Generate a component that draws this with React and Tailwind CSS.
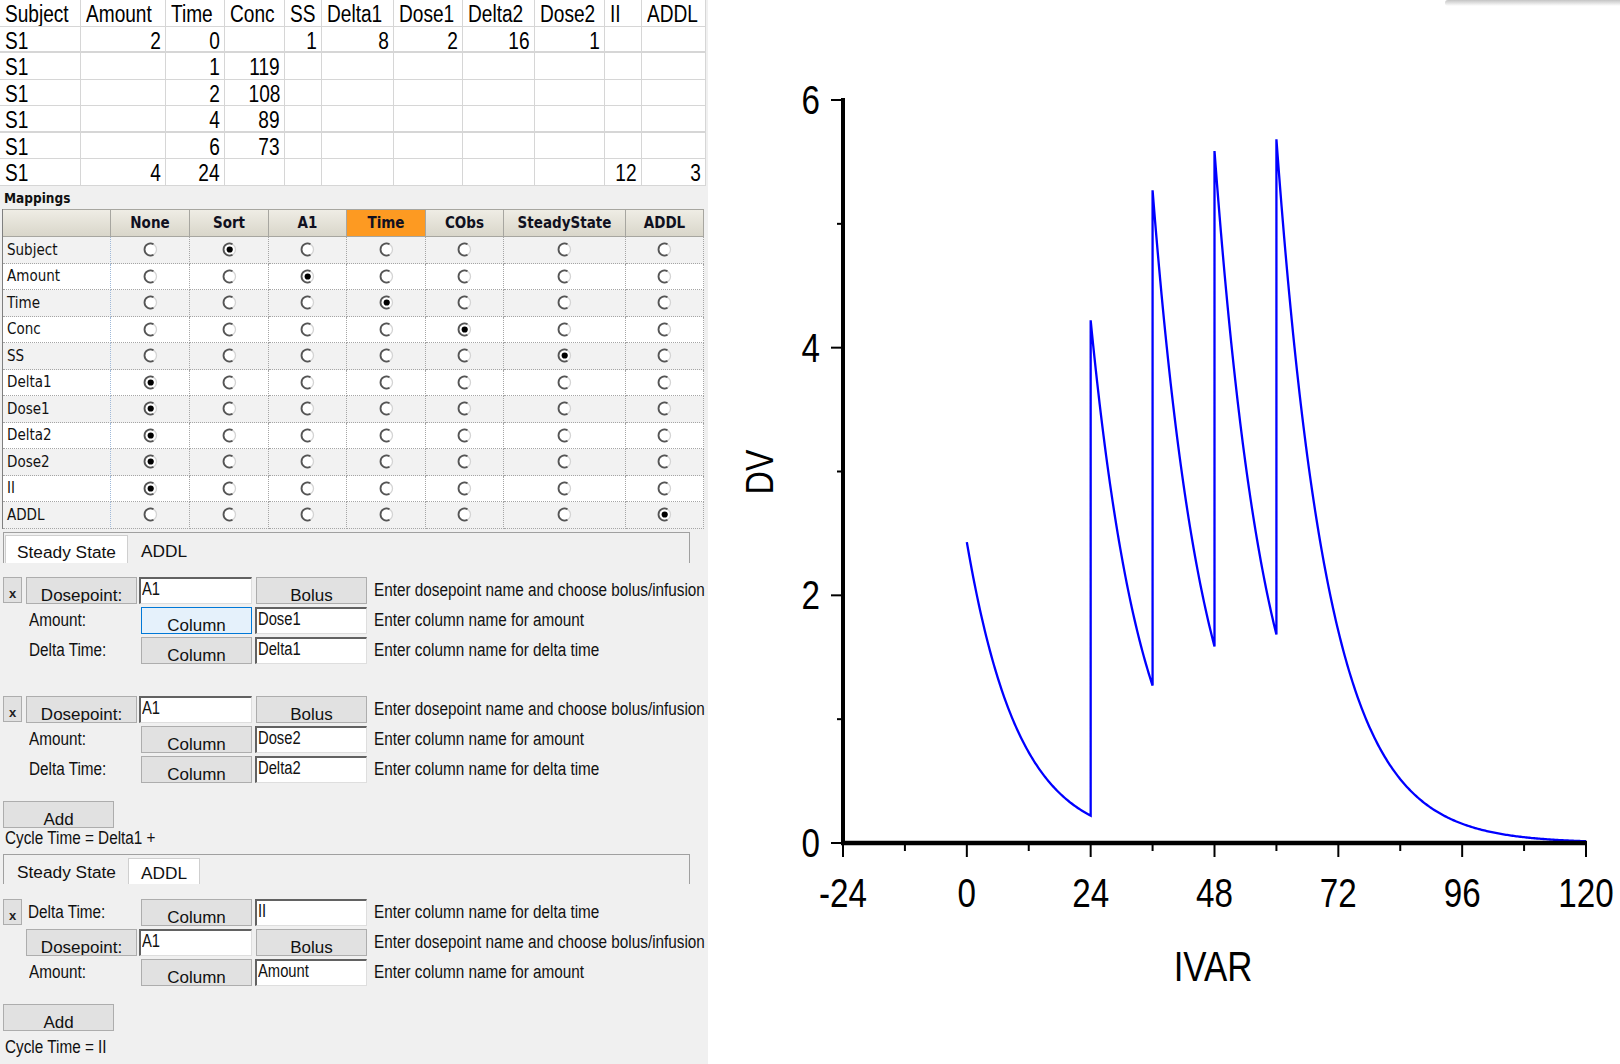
import React from "react";

const SANS = "font-['Liberation_Sans',Arial,sans-serif]";
const TAHOMA = "font-['DejaVu_Sans_Condensed','DejaVu_Sans',sans-serif] font-stretch-condensed";

// condensed text: the UI font is a narrow face, squeezed horizontally from Liberation Sans
const SQ83L = "inline-block whitespace-nowrap origin-left scale-x-[0.83]";
const SQ83R = "inline-block whitespace-nowrap origin-right scale-x-[0.83]";
const SQ85L = "inline-block whitespace-nowrap origin-left scale-x-[0.85]";
const SQ82L = "inline-block whitespace-nowrap origin-left scale-x-[0.82]";

const headers = ["Subject", "Amount", "Time", "Conc", "SS", "Delta1", "Dose1", "Delta2", "Dose2", "II", "ADDL"];
const rows = [
  ["S1", "2", "0", "", "1", "8", "2", "16", "1", "", ""],
  ["S1", "", "1", "119", "", "", "", "", "", "", ""],
  ["S1", "", "2", "108", "", "", "", "", "", "", ""],
  ["S1", "", "4", "89", "", "", "", "", "", "", ""],
  ["S1", "", "6", "73", "", "", "", "", "", "", ""],
  ["S1", "4", "24", "", "", "", "", "", "", "12", "3"],
];

const mapCols = ["None", "Sort", "A1", "Time", "CObs", "SteadyState", "ADDL"];
const mapRows = [
  ["Subject", 1],
  ["Amount", 2],
  ["Time", 3],
  ["Conc", 4],
  ["SS", 5],
  ["Delta1", 0],
  ["Dose1", 0],
  ["Delta2", 0],
  ["Dose2", 0],
  ["II", 0],
  ["ADDL", 6],
];

function Radio({ checked }) {
  return (
    <svg width="15" height="15" viewBox="0 0 15 15">
      <circle cx="7.5" cy="7.5" r="6" fill="#ffffff" stroke="#d4d4d4" strokeWidth="1.3" />
      <path d="M10.5 2.3 A6 6 0 1 0 10.5 12.7" fill="none" stroke="#555555" strokeWidth="1.8" />
      {checked && <circle cx="7.7" cy="7.5" r="3.1" fill="#000000" />}
    </svg>
  );
}

function DataTable() {
  return (
    <div className={`w-[706px] bg-white ${SANS} text-[23px] text-black`}>
      <div className="grid grid-cols-[81px_85px_59px_60px_37px_72px_69px_72px_70px_37px_64px]">
        {headers.map((h) => (
          <div key={h} className="h-[26.5px] leading-[29px] pl-[5px] border-r border-b border-[#d6d6d6] overflow-hidden">
            <span className={SQ83L}>{h}</span>
          </div>
        ))}
        {rows.map((r, ri) =>
          r.map((v, ci) => (
            <div
              key={ri + "-" + ci}
              className={
                (ri === 0 || ri === 3 ? "border-b-2 " : "border-b ") +
                (ci === 0 ? "pl-[5px] text-left " : "pr-[4px] text-right ") +
                "h-[26.5px] leading-[29px] border-r border-[#d6d6d6] overflow-hidden"
              }
            >
              <span className={ci === 0 ? SQ83L : SQ83R}>{v}</span>
            </div>
          ))
        )}
      </div>
    </div>
  );
}

function MappingGrid() {
  return (
    <div className={`ml-[2px] w-[702px] ${TAHOMA} text-[15px]`}>
      <div className="grid grid-cols-[108px_79px_79px_78px_79px_78px_122px_78px] border-l border-[#7f7f7f]">
        <div className="h-[28px] border-t border-r border-b border-[#a7a6a0] bg-gradient-to-b from-[#efede5] to-[#d9d6ca]" />
        {mapCols.map((c) => (
          <div
            key={c}
            className={
              (c === "Time" ? "bg-[#fd9a22] " : "bg-gradient-to-b from-[#efede5] to-[#d9d6ca] ") +
              "h-[28px] border-t border-r border-b border-[#a7a6a0] flex items-center justify-center font-bold text-[#101020]"
            }
          >
            {c}
          </div>
        ))}
        {mapRows.map(([label, sel], ri) => {
          const bg = ri % 2 === 0 ? "bg-[#f2f2f2]" : "bg-white";
          return (
            <React.Fragment key={label}>
              <div className={`${bg} h-[26.5px] pl-[4px] flex items-center text-[#111] border-b border-r border-dotted border-b-[#a5a5a5] border-r-[#9fb9d9]`}>
                {label}
              </div>
              {mapCols.map((c, ci) => (
                <div key={c} className={`${bg} h-[26.5px] flex items-center justify-center border-b border-r border-dotted border-[#a5a5a5]`}>
                  <Radio checked={sel === ci} />
                </div>
              ))}
            </React.Fragment>
          );
        })}
      </div>
    </div>
  );
}

function TabStrip({ active, className }) {
  return (
    <div className={`ml-[3px] w-[687px] border-t border-l border-r border-[#a0a0a0] flex items-end ${SANS} text-[17.3px] text-[#111] ${className}`}>
      <div
        className={
          (active === 0 ? "bg-white border-l border-t border-r border-[#cfcfcf] " : "") +
          "ml-[1px] w-[123px] h-[28px] pt-[3px] leading-[26px] text-center whitespace-nowrap"
        }
      >
        Steady State
      </div>
      <div
        className={
          (active === 1 ? "bg-white border-l border-t border-r border-[#cfcfcf] " : "") +
          "w-[72px] h-[26px] pt-[2px] leading-[25px] text-center"
        }
      >
        ADDL
      </div>
    </div>
  );
}

const BTN = `h-[27px] shrink-0 flex justify-center overflow-hidden border ${SANS} text-[17px] leading-[17px] text-[#111] pt-[9px]`;
const BTN_N = "bg-[#e1e1e1] border-[#adadad]";
const BTN_A = "bg-[#e5f1fb] border-[#0078d7]";
const INPUT = `h-[27px] shrink-0 overflow-hidden bg-white border-t-2 border-l-2 border-t-[#626262] border-l-[#626262] border-r border-b border-r-[#dedede] border-b-[#dedede] pl-[1px] text-[18px] leading-[21px] text-[#111] ${SANS}`;
const DESC = `ml-[7px] text-[18px] leading-[27px] text-[#111] ${SANS}`;
const LABEL = `shrink-0 text-[18px] leading-[27px] text-[#111] ${SANS}`;

function XButton() {
  return (
    <div className={`w-[19px] h-[26px] shrink-0 bg-[#e1e1e1] border border-[#adadad] flex justify-center pt-[9px] ${SANS} text-[13px] leading-[13px] font-bold text-[#222]`}>
      x
    </div>
  );
}

function DosepointRow({ withX, value }) {
  return (
    <div className="flex items-start h-[27px] pl-[3px]">
      {withX ? <XButton /> : <div className="w-[19px] shrink-0" />}
      <div className={`ml-[4px] w-[111px] ${BTN} ${BTN_N}`}>Dosepoint:</div>
      <div className={`ml-[2px] w-[113px] ${INPUT}`}>
        <span className={SQ82L}>{value}</span>
      </div>
      <div className={`ml-[4px] w-[111px] ${BTN} ${BTN_N}`}>Bolus</div>
      <div className={DESC}>
        <span className={SQ85L}>Enter dosepoint name and choose bolus/infusion</span>
      </div>
    </div>
  );
}

function ColumnRow({ label, value, desc, active, withX }) {
  return (
    <div className="flex items-start h-[27px] pl-[3px]">
      {withX ? (
        <>
          <XButton />
          <div className={`ml-[6px] w-[113px] ${LABEL}`}>
            <span className={SQ85L}>{label}</span>
          </div>
        </>
      ) : (
        <div className={`w-[138px] pl-[26px] ${LABEL}`}>
          <span className={SQ85L}>{label}</span>
        </div>
      )}
      <div className={`w-[111px] ${BTN} ${active ? BTN_A : BTN_N}`}>Column</div>
      <div className={`ml-[3px] w-[112px] ${INPUT}`}>
        <span className={SQ82L}>{value}</span>
      </div>
      <div className={DESC}>
        <span className={SQ85L}>{desc}</span>
      </div>
    </div>
  );
}

function AddButton({ className }) {
  return (
    <div className={`ml-[3px] w-[111px] h-[25px] ${BTN} ${BTN_N} ${className}`}>Add</div>
  );
}

// one-compartment profile: k = 0.1/h, steady-state start, then 4 units every 12 h from t = 24
const K = 0.1;
const C0 = 2.43;
const DOSES = [24, 36, 48, 60];
function conc(t, includeAt) {
  let c = C0 * Math.exp(-K * t);
  for (const d of DOSES) {
    if (t > d || (includeAt && t === d)) c += 4 * Math.exp(-K * (t - d));
  }
  return c;
}

const X0 = 135;
const PX = 743 / 144;
const Y0 = 843;
const PY = 743 / 6;
const sx = (t) => X0 + (t + 24) * PX;
const sy = (c) => Y0 - c * PY;

function curvePath() {
  let d = `M${sx(0).toFixed(2)} ${sy(conc(0, true)).toFixed(2)}`;
  for (let i = 1; i <= 480; i++) {
    const t = i / 4;
    if (DOSES.includes(t)) {
      d += ` L${sx(t).toFixed(2)} ${sy(conc(t, false)).toFixed(2)}`;
    }
    d += ` L${sx(t).toFixed(2)} ${sy(conc(t, true)).toFixed(2)}`;
  }
  return d;
}

function Label({ x, y, size, anchor, children }) {
  return (
    <text
      transform={`translate(${x} ${y}) scale(0.83 1)`}
      textAnchor={anchor}
      fontFamily="'Liberation Sans',Arial,sans-serif"
      fontSize={size}
      fill="#000"
    >
      {children}
    </text>
  );
}

function Chart() {
  const xMajor = [-24, 0, 24, 48, 72, 96, 120];
  const xMinor = [-12, 12, 36, 60, 84, 108];
  const yMajor = [0, 2, 4, 6];
  const yMinor = [1, 3, 5];
  return (
    <svg width="912" height="1064" viewBox="0 0 912 1064" className="shrink-0">
      <path d={curvePath()} fill="none" stroke="#0000ff" strokeWidth="2.3" />
      <line x1={X0} y1={98} x2={X0} y2={Y0 + 2} stroke="#000" strokeWidth="4" />
      <line x1={X0 - 2} y1={Y0} x2={sx(120) + 1} y2={Y0} stroke="#000" strokeWidth="4.5" />
      {yMajor.map((v) => (
        <line key={"ym" + v} x1={X0 - 12} y1={sy(v)} x2={X0} y2={sy(v)} stroke="#000" strokeWidth="2" />
      ))}
      {yMinor.map((v) => (
        <line key={"yn" + v} x1={X0 - 6} y1={sy(v)} x2={X0} y2={sy(v)} stroke="#000" strokeWidth="2" />
      ))}
      {xMajor.map((v) => (
        <line key={"xm" + v} x1={sx(v)} y1={Y0} x2={sx(v)} y2={Y0 + 14} stroke="#000" strokeWidth="2" />
      ))}
      {xMinor.map((v) => (
        <line key={"xn" + v} x1={sx(v)} y1={Y0} x2={sx(v)} y2={Y0 + 8} stroke="#000" strokeWidth="2" />
      ))}
      {yMajor.map((v) => (
        <Label key={"yl" + v} x={X0 - 23} y={sy(v) + 14} size={40} anchor="end">
          {v}
        </Label>
      ))}
      {xMajor.map((v) => (
        <Label key={"xl" + v} x={sx(v)} y={907} size={40} anchor="middle">
          {v}
        </Label>
      ))}
      <Label x={505} y={981} size={42} anchor="middle">
        IVAR
      </Label>
      <text
        transform="translate(51 472) rotate(-90) scale(0.84 1)"
        textAnchor="middle"
        dominantBaseline="central"
        fontFamily="'Liberation Sans',Arial,sans-serif"
        fontSize="38"
        fill="#000"
      >
        DV
      </text>
    </svg>
  );
}

export default function App() {
  return (
    <div className="relative flex w-[1620px] h-[1064px] bg-white overflow-hidden">
      <div className="w-[708px] h-[1064px] shrink-0 bg-[#f0f0f0] flex flex-col">
        <DataTable />
        <div className={`h-[23.5px] pl-[4px] pt-[4px] ${TAHOMA} font-bold text-[13.5px] leading-[16px] text-[#111]`}>Mappings</div>
        <MappingGrid />
        <TabStrip active={0} className="mt-[3.5px] h-[31px]" />
        <div className="mt-[14px] flex flex-col gap-[3px]">
          <DosepointRow withX value="A1" />
          <ColumnRow label="Amount:" value="Dose1" desc="Enter column name for amount" active />
          <ColumnRow label="Delta Time:" value="Delta1" desc="Enter column name for delta time" />
        </div>
        <div className="mt-[32px] flex flex-col gap-[3px]">
          <DosepointRow withX value="A1" />
          <ColumnRow label="Amount:" value="Dose2" desc="Enter column name for amount" />
          <ColumnRow label="Delta Time:" value="Delta2" desc="Enter column name for delta time" />
        </div>
        <AddButton className="mt-[18px]" />
        <div className={`h-[26px] pl-[5px] text-[18px] leading-[21px] text-[#111] ${SANS}`}>
          <span className={SQ85L}>Cycle Time = Delta1 +</span>
        </div>
        <TabStrip active={1} className="h-[30px]" />
        <div className="mt-[15px] flex flex-col gap-[3px]">
          <ColumnRow withX label="Delta Time:" value="II" desc="Enter column name for delta time" />
          <DosepointRow value="A1" />
          <ColumnRow label="Amount:" value="Amount" desc="Enter column name for amount" />
        </div>
        <AddButton className="mt-[18px]" />
        <div className={`mt-[4px] h-[24px] pl-[5px] text-[18px] leading-[24px] text-[#111] ${SANS}`}>
          <span className={SQ85L}>Cycle Time = II</span>
        </div>
      </div>
      <Chart />
      <div className="absolute top-0 left-[1445px] w-[175px] h-[6px] bg-gradient-to-b from-[#c4c4c4] to-transparent rounded-l-full" />
    </div>
  );
}
